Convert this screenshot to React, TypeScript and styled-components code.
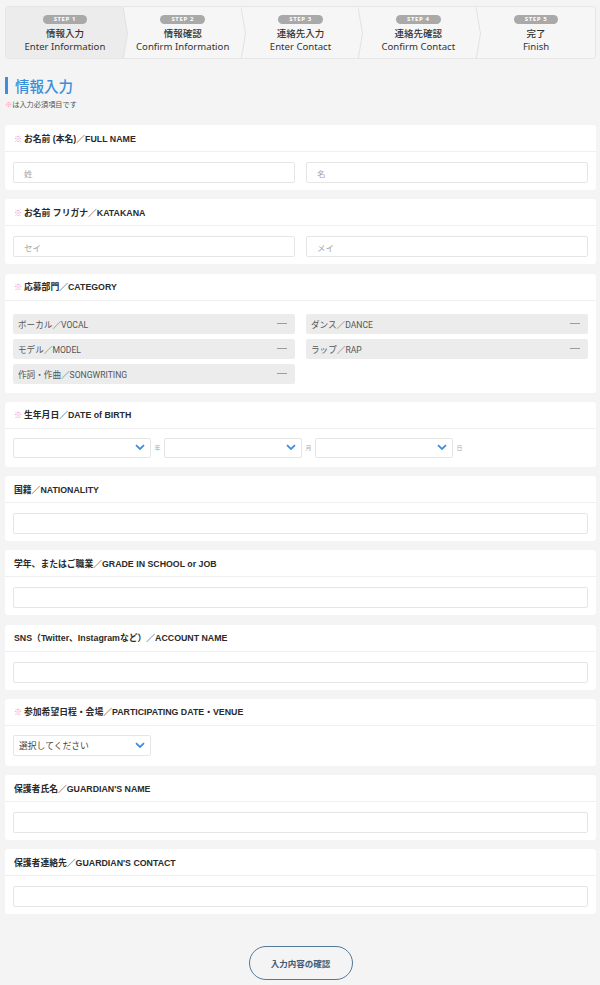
import React from "react";
import styled, { createGlobalStyle } from "styled-components";

const GlobalStyle = createGlobalStyle`
  html, body {
    margin: 0;
    padding: 0;
    background: #f4f4f4;
    font-family: "Liberation Sans", "Noto Sans CJK JP", sans-serif;
    color: #333;
  }
  * { box-sizing: border-box; }
`;

const Page = styled.div`
  width: 600px;
  padding: 6px 4px 6px 5px;
`;

const Stepper = styled.ol`
  display: flex;
  margin: 0;
  padding: 0;
  list-style: none;
  height: 53px;
  background: #f6f6f6;
  border: 1px solid #e6e6e6;
  border-radius: 3px;
  overflow: hidden;
`;

const Step = styled.li<{ $active?: boolean }>`
  position: relative;
  flex: 1;
  display: flex;
  flex-direction: column;
  align-items: center;
  padding-top: 8px;
  background: ${(p) => (p.$active ? "#ececec" : "transparent")};
  font-family: "Noto Sans", "Noto Sans CJK JP", sans-serif;
`;

const Chevron = styled.svg`
  position: absolute;
  top: 0;
  right: -4px;
  width: 5px;
  height: 53px;
  z-index: 1;
`;

const StepPill = styled.span`
  display: inline-block;
  background: #a9a9a9;
  color: #fff;
  font-size: 6px;
  font-weight: bold;
  letter-spacing: 0.6px;
  line-height: 9px;
  height: 9px;
  padding: 0 11px;
  border-radius: 5px;
`;

const StepJa = styled.span`
  font-family: "Noto Sans CJK JP", sans-serif;
  font-size: 9.5px;
  font-weight: 500;
  line-height: 13px;
  margin-top: 3px;
  color: #333;
`;

const StepEn = styled.span`
  font-size: 9.6px;
  line-height: 13px;
  color: #333;
`;

const Heading = styled.h1`
  margin: 18px 0 0;
  border-left: 3px solid #3b8fdb;
  padding-left: 7px;
  font-family: "Noto Sans CJK JP", sans-serif;
  font-size: 14.5px;
  font-weight: 500;
  line-height: 17px;
  color: #3b8fdb;
`;

const Note = styled.p`
  margin: 5px 0 0;
  font-family: "Noto Sans CJK JP", sans-serif;
  font-size: 7.2px;
  color: #555;
`;

const Mark = styled.span`
  color: #f29ab0;
`;

const Cards = styled.div`
  display: flex;
  flex-direction: column;
  gap: 9.25px;
  margin-top: 16px;
`;

const Card = styled.section`
  background: #fff;
  border-radius: 3px;
`;

const CardHead = styled.div`
  height: 27px;
  display: flex;
  align-items: center;
  padding: 0 9px;
  border-bottom: 1px solid #efefef;
  font-size: 8.8px;
  font-weight: bold;
  color: #2a2a2a;
`;

const ReqMark = styled.span`
  font-family: "Noto Sans CJK JP", sans-serif;
  font-size: 8px;
  font-weight: bold;
  color: #ee8fa8;
  margin-right: 2px;
`;

const CardBody = styled.div<{ $pt?: number; $pb?: number }>`
  padding: ${(p) => p.$pt ?? 10}px 8px ${(p) => p.$pb ?? 7}px;
`;

const Pair = styled.div`
  display: grid;
  grid-template-columns: 1fr 1fr;
  column-gap: 11px;
  row-gap: 5px;
`;

const Input = styled.input`
  display: block;
  width: 100%;
  height: 21px;
  border: 1px solid #e6e6e6;
  border-radius: 2px;
  padding: 0 10px;
  font-family: "Noto Sans CJK JP", sans-serif;
  font-size: 8.5px;
  color: #333;
  background: #fff;
  outline: none;
  &::placeholder { color: #a5a5a5; }
`;

const Choice = styled.div`
  display: flex;
  align-items: center;
  justify-content: space-between;
  height: 20px;
  padding: 0 5px;
  background: #ececec;
  border-radius: 2px;
  font-family: "Roboto", "Noto Sans CJK JP", sans-serif;
  font-size: 8.6px;
  color: #555;
`;

const Dash = styled.span`
  width: 10px;
  height: 1px;
  background: #9c9c9c;
  margin-right: 3px;
`;

const DateRow = styled.div`
  display: flex;
  align-items: center;
`;

const Unit = styled.span`
  width: 13px;
  text-align: center;
  font-family: "Noto Sans CJK JP", sans-serif;
  font-size: 6px;
  color: #aaa;
`;

const SelectBox = styled.div<{ $h?: number }>`
  width: 138px;
  height: ${(p) => p.$h ?? 20}px;
  display: flex;
  align-items: center;
  justify-content: space-between;
  padding: 0 5px;
  border: 1px solid #e6e6e6;
  border-radius: 2px;
  background: #fff;
  font-family: "Noto Sans CJK JP", sans-serif;
  font-size: 8.8px;
  color: #444;
`;

const ButtonRow = styled.div`
  display: flex;
  justify-content: center;
  padding: 32px 0 0;
`;

const SubmitButton = styled.button`
  width: 104px;
  height: 34px;
  border: 1.5px solid #52799a;
  border-radius: 17px;
  background: transparent;
  font-family: "Noto Sans CJK JP", sans-serif;
  font-size: 8.5px;
  font-weight: bold;
  color: #3e5a74;
`;

const ChevronDown = () => (
  <svg width="10" height="7" viewBox="0 0 10 7">
    <polyline points="1,1.2 5,5 9,1.2" fill="none" stroke="#3a8fe0" strokeWidth="1.8" />
  </svg>
);

const steps = [
  { no: 1, ja: "情報入力", en: "Enter Information" },
  { no: 2, ja: "情報確認", en: "Confirm Information" },
  { no: 3, ja: "連絡先入力", en: "Enter Contact" },
  { no: 4, ja: "連絡先確認", en: "Confirm Contact" },
  { no: 5, ja: "完了", en: "Finish" },
];

const categories = [
  "ボーカル／VOCAL",
  "ダンス／DANCE",
  "モデル／MODEL",
  "ラップ／RAP",
  "作詞・作曲／SONGWRITING",
];

const Label = ({ req, children }: { req?: boolean; children: React.ReactNode }) => (
  <CardHead>
    {req && <ReqMark>※</ReqMark>}
    <span>{children}</span>
  </CardHead>
);

export default function App() {
  return (
    <Page>
      <GlobalStyle />
      <Stepper>
        {steps.map((s, i) => (
          <Step key={s.no} $active={i === 0}>
            <StepPill>STEP {s.no}</StepPill>
            <StepJa>{s.ja}</StepJa>
            <StepEn>{s.en}</StepEn>
            {i < steps.length - 1 && (
              <Chevron viewBox="0 0 5 53" preserveAspectRatio="none">
                {i === 0 && <polygon points="0,0 4.5,26.5 0,53" fill="#ececec" />}
                <polyline points="0,0 4.5,26.5 0,53" fill="none" stroke="#dcdcdc" strokeWidth="0.8" />
              </Chevron>
            )}
          </Step>
        ))}
      </Stepper>

      <Heading>情報入力</Heading>
      <Note>
        <Mark>※</Mark>は入力必須項目です
      </Note>

      <Cards>
        <Card>
          <Label req>お名前 (本名)／FULL NAME</Label>
          <CardBody>
            <Pair>
              <Input placeholder="姓" />
              <Input placeholder="名" />
            </Pair>
          </CardBody>
        </Card>

        <Card>
          <Label req>お名前 フリガナ／KATAKANA</Label>
          <CardBody>
            <Pair>
              <Input placeholder="セイ" />
              <Input placeholder="メイ" />
            </Pair>
          </CardBody>
        </Card>

        <Card>
          <Label req>応募部門／CATEGORY</Label>
          <CardBody $pt={13} $pb={9}>
            <Pair>
              {categories.map((c) => (
                <Choice key={c}>
                  <span>{c}</span>
                  <Dash />
                </Choice>
              ))}
            </Pair>
          </CardBody>
        </Card>

        <Card>
          <Label req>生年月日／DATE of BIRTH</Label>
          <CardBody $pt={9} $pb={9}>
            <DateRow>
              <SelectBox><span /><ChevronDown /></SelectBox>
              <Unit>年</Unit>
              <SelectBox><span /><ChevronDown /></SelectBox>
              <Unit>月</Unit>
              <SelectBox><span /><ChevronDown /></SelectBox>
              <Unit>日</Unit>
            </DateRow>
          </CardBody>
        </Card>

        <Card>
          <Label>国籍／NATIONALITY</Label>
          <CardBody>
            <Input />
          </CardBody>
        </Card>

        <Card>
          <Label>学年、またはご職業／GRADE IN SCHOOL or JOB</Label>
          <CardBody>
            <Input />
          </CardBody>
        </Card>

        <Card>
          <Label>SNS（Twitter、Instagramなど）／ACCOUNT NAME</Label>
          <CardBody>
            <Input />
          </CardBody>
        </Card>

        <Card>
          <Label req>参加希望日程・会場／PARTICIPATING DATE・VENUE</Label>
          <CardBody $pt={9} $pb={10}>
            <SelectBox $h={21}>
              <span>選択してください</span>
              <ChevronDown />
            </SelectBox>
          </CardBody>
        </Card>

        <Card>
          <Label>保護者氏名／GUARDIAN'S NAME</Label>
          <CardBody>
            <Input />
          </CardBody>
        </Card>

        <Card>
          <Label>保護者連絡先／GUARDIAN'S CONTACT</Label>
          <CardBody>
            <Input />
          </CardBody>
        </Card>
      </Cards>

      <ButtonRow>
        <SubmitButton type="button">入力内容の確認</SubmitButton>
      </ButtonRow>
    </Page>
  );
}
